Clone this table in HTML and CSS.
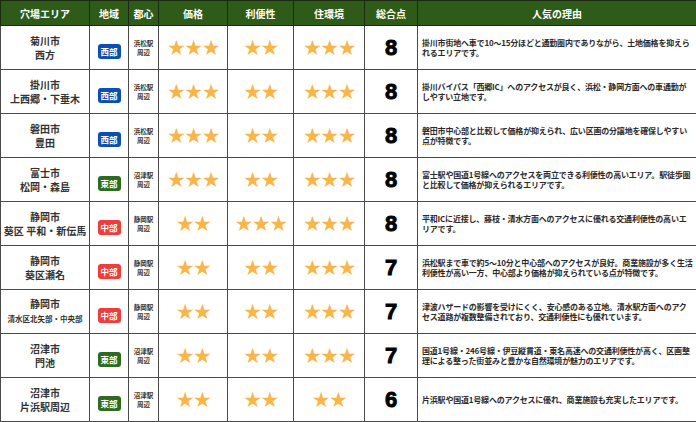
FILE: index.html
```html
<!DOCTYPE html>
<html lang="ja">
<head>
<meta charset="utf-8">
<link rel="stylesheet" href="styles.css">
</head>
<body>
<table class="rank">
  <colgroup>
    <col class="c-area"><col class="c-region"><col class="c-center"><col class="c-price"><col class="c-conv"><col class="c-env"><col class="c-score"><col class="c-reason">
  </colgroup>
  <thead>
    <tr><th>穴場エリア</th><th>地域</th><th>都心</th><th>価格</th><th>利便性</th><th>住環境</th><th>総合点</th><th>人気の理由</th></tr>
  </thead>
  <tbody>
    <tr>
      <td class="area">菊川市<br>西方</td>
      <td><span class="badge west">西部</span></td>
      <td class="station">浜松駅<br>周辺</td>
      <td class="stars">★★★</td><td class="stars">★★</td><td class="stars">★★★</td>
      <td class="score">8</td>
      <td class="reason">掛川市街地へ車で10〜15分ほどと通勤圏内でありながら、土地価格を抑えられるエリアです。</td>
    </tr>
    <tr>
      <td class="area">掛川市<br>上西郷・下垂木</td>
      <td><span class="badge west">西部</span></td>
      <td class="station">浜松駅<br>周辺</td>
      <td class="stars">★★★</td><td class="stars">★★</td><td class="stars">★★★</td>
      <td class="score">8</td>
      <td class="reason">掛川バイパス「西郷IC」へのアクセスが良く、浜松・静岡方面への車通勤がしやすい立地です。</td>
    </tr>
    <tr>
      <td class="area">磐田市<br>豊田</td>
      <td><span class="badge west">西部</span></td>
      <td class="station">浜松駅<br>周辺</td>
      <td class="stars">★★★</td><td class="stars">★★</td><td class="stars">★★★</td>
      <td class="score">8</td>
      <td class="reason">磐田市中心部と比較して価格が抑えられ、広い区画の分譲地を確保しやすい点が特徴です。</td>
    </tr>
    <tr>
      <td class="area">富士市<br>松岡・森島</td>
      <td><span class="badge east">東部</span></td>
      <td class="station">沼津駅<br>周辺</td>
      <td class="stars">★★★</td><td class="stars">★★</td><td class="stars">★★★</td>
      <td class="score">8</td>
      <td class="reason">富士駅や国道1号線へのアクセスを両立できる利便性の高いエリア。駅徒歩圏と比較して価格が抑えられるエリアです。</td>
    </tr>
    <tr>
      <td class="area">静岡市<br>葵区 平和・新伝馬</td>
      <td><span class="badge mid">中部</span></td>
      <td class="station">静岡駅<br>周辺</td>
      <td class="stars">★★</td><td class="stars">★★★</td><td class="stars">★★★</td>
      <td class="score">8</td>
      <td class="reason">平和ICに近接し、藤枝・清水方面へのアクセスに優れる交通利便性の高いエリアです。</td>
    </tr>
    <tr>
      <td class="area">静岡市<br>葵区瀬名</td>
      <td><span class="badge mid">中部</span></td>
      <td class="station">静岡駅<br>周辺</td>
      <td class="stars">★★</td><td class="stars">★★</td><td class="stars">★★★</td>
      <td class="score">7</td>
      <td class="reason">浜松駅まで車で約5〜10分と中心部へのアクセスが良好。商業施設が多く生活利便性が高い一方、中心部より価格が抑えられている点が特徴です。</td>
    </tr>
    <tr>
      <td class="area">静岡市<br><span class="small">清水区北矢部・中央部</span></td>
      <td><span class="badge mid">中部</span></td>
      <td class="station">静岡駅<br>周辺</td>
      <td class="stars">★★</td><td class="stars">★★</td><td class="stars">★★★</td>
      <td class="score">7</td>
      <td class="reason">津波ハザードの影響を受けにくく、安心感のある立地。清水駅方面へのアクセス道路が複数整備されており、交通利便性にも優れています。</td>
    </tr>
    <tr>
      <td class="area">沼津市<br>門池</td>
      <td><span class="badge east">東部</span></td>
      <td class="station">沼津駅<br>周辺</td>
      <td class="stars">★★</td><td class="stars">★★</td><td class="stars">★★★</td>
      <td class="score">7</td>
      <td class="reason">国道1号線・246号線・伊豆縦貫道・東名高速への交通利便性が高く、区画整理による整った街並みと豊かな自然環境が魅力のエリアです。</td>
    </tr>
    <tr>
      <td class="area">沼津市<br>片浜駅周辺</td>
      <td><span class="badge east">東部</span></td>
      <td class="station">沼津駅<br>周辺</td>
      <td class="stars">★★</td><td class="stars">★★</td><td class="stars">★★</td>
      <td class="score">6</td>
      <td class="reason">片浜駅や国道1号線へのアクセスに優れ、商業施設も充実したエリアです。</td>
    </tr>
  </tbody>
</table>
</body>
</html>
```
FILE: styles.css
```css
html, body {
  margin: 0;
  padding: 0;
  background: #ffffff;
}
body {
  font-family: "Noto Sans CJK JP", "Noto Sans", sans-serif;
  color: #222;
}
.rank {
  border-collapse: collapse;
  table-layout: fixed;
  width: 696px;
}
.c-area { width: 89px; }
.c-region { width: 39px; }
.c-center { width: 30px; }
.c-price { width: 69px; }
.c-conv { width: 66px; }
.c-env { width: 71px; }
.c-score { width: 53px; }
.c-reason { width: 279px; }

.rank th {
  background: #2e5c18;
  color: #fff;
  font-size: 10px;
  font-weight: 700;
  height: 24px;
  padding: 0;
  border: 1px solid #1c2a12;
  text-align: center;
  vertical-align: middle;
}
.rank td {
  height: 43px;
  padding: 0;
  border: 1px solid #4a4a4a;
  text-align: center;
  vertical-align: middle;
}
.area {
  font-size: 10px;
  font-weight: 700;
  line-height: 14px;
  color: #333;
}
.small {
  font-size: 7.5px;
}
.badge {
  display: inline-block;
  width: 23px;
  height: 15px;
  line-height: 15px;
  border-radius: 3px;
  color: #fff;
  font-size: 8.5px;
  font-weight: 700;
}
.west { background: #0a4fb5; }
.east { background: #2f6b1f; }
.mid { background: #f23b3b; }
.station {
  font-size: 6.5px;
  line-height: 9px;
  font-weight: 700;
  color: #333;
}
.stars {
  font-family: "DejaVu Sans", sans-serif;
  font-size: 21px;
  line-height: 20px;
  color: #f8b64a;
  letter-spacing: -1.5px;
}
.score {
  font-family: "Liberation Sans", Arial, sans-serif;
  font-size: 22px;
  font-weight: 900;
  color: #000;
  -webkit-text-stroke: 0.9px #000;
}
.rank td.reason {
  text-align: left;
  font-size: 8px;
  line-height: 10px;
  font-weight: 700;
  color: #2a2a2a;
  letter-spacing: -0.2px;
  padding: 0 2px 0 4px;
}
```
